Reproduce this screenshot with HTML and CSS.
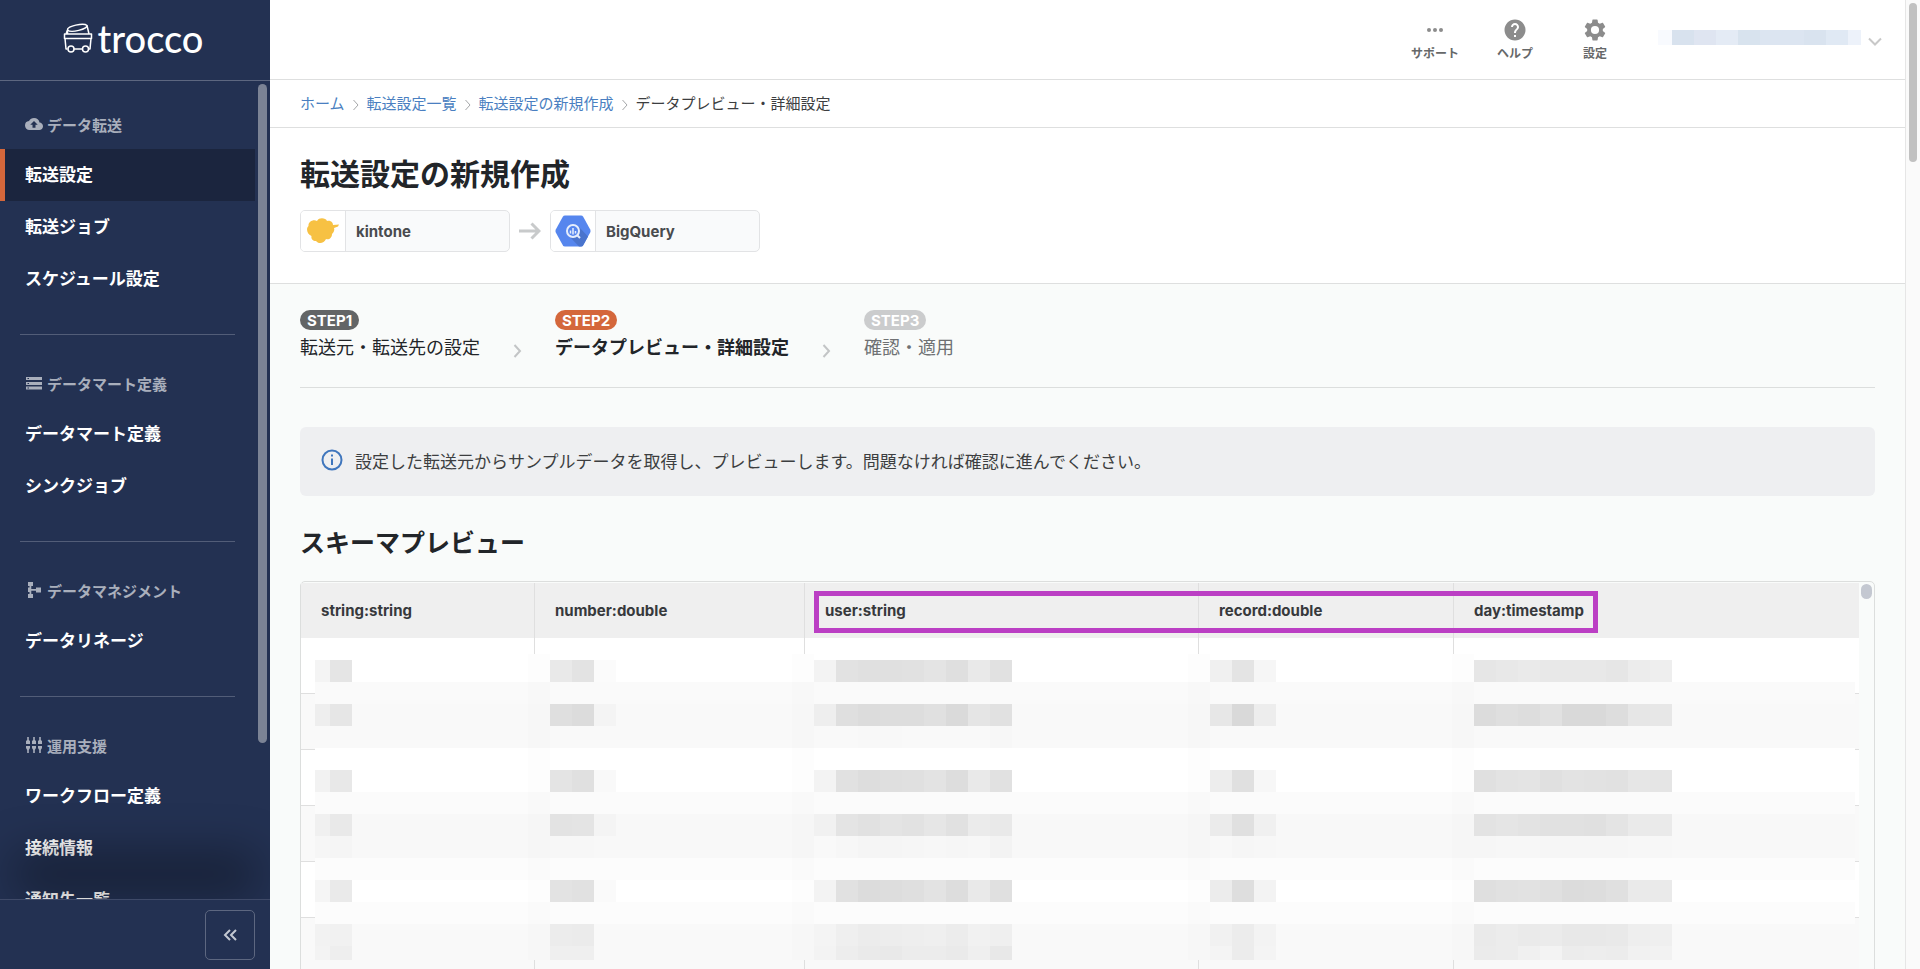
FILE: index.html
```html
<!DOCTYPE html>
<html lang="ja">
<head>
    <meta charset="UTF-8">
    <meta name="viewport" content="width=device-width, initial-scale=1.0">
    <title>転送設定の新規作成 | trocco</title>
    <link rel="stylesheet" href="styles.css">
</head>
<body>
<div class="app">
    <!-- サイドバー -->
    <aside class="sidebar">
        <a class="logo" href="#" aria-label="trocco">
            <svg width="30" height="32" viewBox="0 0 30 32" fill="none" stroke="#fff" stroke-width="1.5" stroke-linejoin="round">
                <path d="M4.500 12V8L3.500 10.500V12M24 3.500L26 12"/>
                <path d="M4.500 8C3.500 4 21 .5 24 3.500 24.500 7 8 11.500 4.500 8z"/>
                <path d="M1.500 12h27v4.500h-27zM2 16.500l1 10.500h1.500M28 16.500L27 27h-1.500M11 27h8"/>
                <circle cx="8" cy="27" r="3"/>
                <circle cx="22.500" cy="27" r="3"/>
            </svg>
            <span>trocco</span>
        </a>
        <nav class="menu">
            <section class="menu-group">
                <h2 class="menu-title">
                    <svg width="18" height="18" viewBox="0 0 24 24" fill="currentColor"><path d="M19.350 10.040A7.490 7.490 0 0 0 12 4C9.110 4 6.600 5.640 5.350 8.040A5.994 5.994 0 0 0 0 14c0 3.310 2.690 6 6 6h13c2.760 0 5-2.240 5-5 0-2.640-2.050-4.780-4.650-4.960zM14 13v4h-4v-4H7l5-5 5 5h-3z"/></svg>
                    データ転送
                </h2>
                <a class="menu-item active" href="#">転送設定</a>
                <a class="menu-item" href="#">転送ジョブ</a>
                <a class="menu-item" href="#">スケジュール設定</a>
            </section>
            <section class="menu-group">
                <h2 class="menu-title">
                    <svg width="18" height="18" viewBox="0 0 18 18" fill="currentColor"><path fill-rule="evenodd" d="M1 3h16v3H1zM2.500 4v1H4V4zM1 8h16v3H1zM2.500 9v1H4V9zM1 12.500h16v3H1zM2.500 13.500v1H4v-1z"/></svg>
                    データマート定義
                </h2>
                <a class="menu-item" href="#">データマート定義</a>
                <a class="menu-item" href="#">シンクジョブ</a>
            </section>
            <section class="menu-group">
                <h2 class="menu-title">
                    <svg width="18" height="18" viewBox="0 0 18 18" fill="currentColor"><path d="M3 1h5v4H6.300v3H11V6.500h5v5h-5V9.700H6.300V13H8v4H3v-4h1.500v-2H3V6.500h1.500V5H3z"/></svg>
                    データマネジメント
                </h2>
                <a class="menu-item" href="#">データリネージ</a>
            </section>
            <section class="menu-group">
                <h2 class="menu-title">
                    <svg width="18" height="18" viewBox="0 0 18 18" fill="currentColor"><path d="M2.200 1h1.600v3L5 5v3H1V5l1.200-1zM8.200 1h1.600v3L11 5v3H7V5l1.200-1zM14.200 1h1.600v3L17 5v3h-4V5l1.200-1zM1 10h4v2l-1.200 2v3H2.200v-3L1 12zM7 10h4v2l-1.200 2v3H8.200v-3L7 12zM13 10h4v2l-1.200 2v3h-1.600v-3L13 12z"/></svg>
                    運用支援
                </h2>
                <a class="menu-item" href="#">ワークフロー定義</a>
                <a class="menu-item" href="#">接続情報</a>
                <a class="menu-item" href="#">通知先一覧</a>
            </section>
        </nav>
        <span class="menu-scroll"></span>
        <div class="sidebar-footer">
            <button class="collapse" type="button" aria-label="メニューを閉じる">
                <svg width="16" height="14" viewBox="0 0 16 14" fill="none" stroke="currentColor" stroke-width="2"><path d="M8 2L3 7l5 5M14 2L9 7l5 5"/></svg>
            </button>
        </div>
    </aside>

    <main class="main">
        <header class="topbar">
            <button class="top-btn" type="button">
                <svg width="22" height="22" viewBox="0 0 22 22" fill="currentColor"><circle cx="5" cy="11" r="2"/><circle cx="11" cy="11" r="2"/><circle cx="17" cy="11" r="2"/></svg>
                サポート
            </button>
            <button class="top-btn" type="button">
                <svg width="22" height="22" viewBox="1 1 22 22" fill="currentColor"><path d="M12 1.500C6.200 1.500 1.500 6.200 1.500 12S6.200 22.500 12 22.500 22.500 17.800 22.500 12 17.800 1.500 12 1.500zM13 19h-2v-2h2v2zm2.070-7.750l-.9.920C13.450 12.900 13 13.500 13 15h-2v-.5c0-1.100.450-2.100 1.170-2.830l1.240-1.260c.370-.360.590-.860.590-1.410 0-1.100-.9-2-2-2s-2 .9-2 2H8c0-2.210 1.790-4 4-4s4 1.790 4 4c0 .880-.360 1.680-.930 2.250z"/></svg>
                ヘルプ
            </button>
            <button class="top-btn" type="button">
                <svg width="22" height="22" viewBox="1.500 1.500 21 21" fill="currentColor"><path d="M19.430 12.980c.040-.320.070-.640.070-.980s-.030-.660-.070-.980l2.110-1.650c.190-.150.240-.420.120-.640l-2-3.460c-.120-.220-.390-.300-.610-.220l-2.490 1c-.520-.400-1.080-.730-1.690-.980l-.380-2.650A.488.488 0 0 0 14 2h-4c-.250 0-.460.180-.490.420l-.380 2.650c-.610.250-1.170.590-1.690.980l-2.490-1c-.230-.090-.490 0-.610.220l-2 3.460c-.130.220-.070.490.120.640l2.110 1.650c-.040.320-.070.650-.070.980s.030.660.070.980l-2.110 1.650c-.190.150-.240.420-.120.640l2 3.460c.120.220.390.300.610.220l2.490-1c.520.400 1.080.730 1.690.980l.380 2.650c.030.240.240.420.490.420h4c.250 0 .460-.180.490-.420l.380-2.650c.610-.250 1.170-.590 1.690-.980l2.490 1c.230.090.490 0 .610-.220l2-3.460c.120-.220.070-.490-.120-.640l-2.110-1.650zM12 15.900a3.900 3.900 0 1 1 0-7.800 3.900 3.900 0 0 1 0 7.800z"/></svg>
                設定
            </button>
            <button class="account" type="button" aria-label="アカウント">
                <svg width="203" height="15" viewBox="0 0 203 15" shape-rendering="crispEdges">
                    <path fill="#f8fafe" d="M0 0h14v15H0z"/>
                    <path fill="#d8e2ee" d="M14 0h22v15H14z"/>
                    <path fill="#dfe5f1" d="M36 0h22v15H36z"/>
                    <path fill="#e4ebf5" d="M58 0h22v15H58z"/>
                    <path fill="#d8e3ee" d="M80 0h22v15H80z"/>
                    <path fill="#dce5f1" d="M102 0h44v15h-44z"/>
                    <path fill="#d9e3ef" d="M146 0h22v15h-22z"/>
                    <path fill="#e0e9f4" d="M168 0h22v15h-22z"/>
                    <path fill="#edf2fa" d="M190 0h13v15h-13z"/>
                </svg>
                <svg class="account-arrow" width="14" height="10" viewBox="0 0 14 10" fill="none" stroke="#c8c8c8" stroke-width="2"><path d="M1 1.500l6 6 6-6"/></svg>
            </button>
        </header>

        <nav class="breadcrumb">
            <a href="#">ホーム</a>
            <svg class="crumb-arrow" width="8" height="12" viewBox="0 0 8 12"><path d="M1.500 1L6 6l-4.500 5"/></svg>
            <a href="#">転送設定一覧</a>
            <svg class="crumb-arrow" width="8" height="12" viewBox="0 0 8 12"><path d="M1.500 1L6 6l-4.500 5"/></svg>
            <a href="#">転送設定の新規作成</a>
            <svg class="crumb-arrow" width="8" height="12" viewBox="0 0 8 12"><path d="M1.500 1L6 6l-4.500 5"/></svg>
            <span>データプレビュー・詳細設定</span>
        </nav>

        <div class="page-head">
            <h1>転送設定の新規作成</h1>
            <div class="route">
                <div class="connector">
                    <span class="connector-icon">
                        <svg width="32" height="26" viewBox="0 0 32 26"><path fill="#f7c143" d="M10 3c2-4 9-3 10 0 4-1 6 2 6 4l6-.5-1 2-4 1.500c1 3-1 5-2 6 0 4-3 6-6 5-2 5-8 5-10 2-4 0-5-3-4.500-5C-.5 16-1 10 1.500 8 1 4 6 1 10 3z"/></svg>
                    </span>
                    <span class="connector-name">kintone</span>
                </div>
                <svg class="route-arrow" width="22" height="18" viewBox="0 0 22 18" fill="none" stroke="#c8cacb" stroke-width="3"><path d="M0 9h19M12.500 1.500L20 9l-7.500 7.500"/></svg>
                <div class="connector">
                    <span class="connector-icon">
                        <svg width="36" height="32" viewBox="0 0 36 32">
                            <path fill="#5686ee" d="M10 .5h16q1.500 0 2.200 1.200l7 12.800q.8 1.500 0 3l-7 12.800q-.7 1.200-2.200 1.200H10q-1.500 0-2.200-1.200l-7-12.800q-.8-1.500 0-3l7-12.800Q8.500.5 10 .5z"/>
                            <path fill="#4a74cd" d="M14 21l10-9 9 9.500-4.800 8.800q-.7 1.200-2.200 1.200h-2z"/>
                            <circle cx="18" cy="16" r="6" fill="#5686ee" stroke="#e6eefc" stroke-width="2"/>
                            <path stroke="#e6eefc" stroke-width="2" d="M22.500 20.500l2.500 2.500"/>
                            <path stroke="#e6eefc" stroke-width="1.500" d="M15.500 15.500v3M18 13v6.500M20.500 16v2.500"/>
                        </svg>
                    </span>
                    <span class="connector-name">BigQuery</span>
                </div>
            </div>
        </div>

        <div class="content">
            <ol class="steps">
                <li class="step done"><span class="badge">STEP1</span>転送元・転送先の設定</li>
                <li class="step-arrow"><svg width="9" height="14" viewBox="0 0 9 14"><path d="M1.500 1L7 7l-5.500 6"/></svg></li>
                <li class="step current"><span class="badge">STEP2</span>データプレビュー・詳細設定</li>
                <li class="step-arrow"><svg width="9" height="14" viewBox="0 0 9 14"><path d="M1.500 1L7 7l-5.500 6"/></svg></li>
                <li class="step todo"><span class="badge">STEP3</span>確認・適用</li>
            </ol>

            <div class="notice">
                <svg width="22" height="22" viewBox="0 0 22 22" fill="none" stroke="#3f76bd" stroke-width="2"><circle cx="11" cy="11" r="9.500"/><path d="M11 9.500V16M11 5.500v2"/></svg>
                <p>設定した転送元からサンプルデータを取得し、プレビューします。問題なければ確認に進んでください。</p>
            </div>

            <h2 class="section-title">スキーマプレビュー</h2>
            <div class="preview">
                <table>
                    <colgroup>
                        <col class="col-string"><col class="col-number"><col class="col-user"><col class="col-record"><col>
                    </colgroup>
                    <thead>
                        <tr><th>string:string</th><th>number:double</th><th>user:string</th><th>record:double</th><th>day:timestamp</th></tr>
                    </thead>
                    <tbody>
                        <tr><td></td><td></td><td></td><td></td><td></td></tr>
                        <tr><td></td><td></td><td></td><td></td><td></td></tr>
                        <tr><td></td><td></td><td></td><td></td><td></td></tr>
                        <tr><td></td><td></td><td></td><td></td><td></td></tr>
                        <tr><td></td><td></td><td></td><td></td><td></td></tr>
                        <tr><td></td><td></td><td></td><td></td><td></td></tr>
                    </tbody>
                </table>
                <svg class="mosaic" id="mosaic" shape-rendering="crispEdges" aria-hidden="true"></svg>
                <span class="highlight"></span>
                <span class="preview-scroll"></span>
            </div>
        </div>
    </main>
    <div class="page-scroll"><span></span></div>
</div>
<script src="script.js"></script>
</body>
</html>
```
FILE: styles.css
```css
* {
    box-sizing: border-box;
}

body {
    margin: 0;
    font-family: Inter, "Noto Sans CJK JP", sans-serif;
    color: #222529;
    background: #f9fbfa;
    overflow: hidden;
}

h1, h2, p, ol {
    margin: 0;
    padding: 0;
}

a {
    text-decoration: none;
}

button {
    font-family: inherit;
    background: none;
    border: none;
    padding: 0;
    cursor: pointer;
}

svg {
    flex-shrink: 0;
}

.app {
    display: flex;
    height: 100vh;
}

/* サイドバー */
.sidebar {
    position: relative;
    display: flex;
    flex-direction: column;
    flex: 0 0 270px;
    background: #233152;
    overflow: hidden;
}

.logo {
    display: flex;
    align-items: center;
    justify-content: center;
    gap: 5px;
    flex: 0 0 81px;
    padding-right: 4px;
    padding-bottom: 5px;
    border-bottom: 1px solid #5d6780;
    color: #fff;
    font-family: Lato, sans-serif;
    font-size: 38px;
    font-weight: 500;
    line-height: 40px;
}

.menu {
    flex: 1;
    min-height: 0;
    overflow: hidden;
    padding-right: 15px;
}

.menu-group {
    padding: 31px 0 29px;
}

.menu-group + .menu-group::before {
    content: "";
    display: block;
    height: 1px;
    margin: 0 20px 36px;
    background: #525d78;
}

.menu-group + .menu-group {
    padding-top: 0;
}

.menu-title {
    display: flex;
    align-items: center;
    gap: 4px;
    height: 24px;
    margin-bottom: 13px;
    padding-left: 25px;
    color: #a9afbc;
    font-size: 15px;
    font-weight: 700;
}

.menu-item {
    display: block;
    height: 52px;
    padding-left: 25px;
    color: #fff;
    font-size: 17px;
    font-weight: 700;
    line-height: 52px;
}

.menu-item.active {
    background: #1b253e;
    box-shadow: inset 5px 0 #d4673b;
}

.menu-scroll {
    position: absolute;
    top: 84px;
    right: 3px;
    width: 9px;
    height: 68%;
    border-radius: 5px;
    background: #7b8395;
}

.sidebar-footer {
    position: relative;
    display: flex;
    align-items: center;
    justify-content: flex-end;
    flex: 0 0 70px;
    padding-right: 15px;
    border-top: 1px solid #3f4a68;
    background: #233152;
    box-shadow: 0 -60px 45px -14px rgba(0, 0, 0, 0.35);
}

.collapse {
    display: flex;
    align-items: center;
    justify-content: center;
    width: 50px;
    height: 50px;
    border: 1px solid #5d6780;
    border-radius: 5px;
    color: #c3c8d2;
}

/* メイン */
.main {
    flex: 1;
    min-width: 0;
    overflow: hidden;
}

.topbar {
    display: flex;
    justify-content: flex-end;
    height: 80px;
    padding-right: 23px;
    border-bottom: 1px solid #dedfdf;
    background: #fff;
}

.top-btn {
    display: flex;
    flex-direction: column;
    align-items: center;
    gap: 4px;
    width: 80px;
    padding-top: 19px;
    color: #666869;
    font-size: 12px;
    font-weight: 700;
    line-height: 18px;
}

.top-btn svg {
    color: #8c8c8c;
}

.account {
    display: flex;
    align-items: center;
    gap: 7px;
    height: 75px;
    margin-left: 23px;
}

.account-arrow {
    margin-top: 9px;
}

.breadcrumb {
    display: flex;
    align-items: center;
    gap: 7px;
    height: 48px;
    padding: 0 30px 2px;
    border-bottom: 1px solid #dedfdf;
    background: #fff;
    color: #3c3e40;
    font-size: 15px;
}

.breadcrumb a {
    color: #4a7fc1;
}

.crumb-arrow {
    margin-top: 5px;
    fill: none;
    stroke: #a5a7a9;
}

.page-head {
    height: 156px;
    padding: 24px 30px 0;
    border-bottom: 1px solid #dedfdf;
    background: #fff;
}

h1 {
    margin-bottom: 14px;
    font-size: 30px;
    line-height: 44px;
}

.route {
    display: flex;
    align-items: center;
    gap: 9px;
}

.connector {
    display: flex;
    width: 210px;
    height: 42px;
    border: 1px solid #e2e3e5;
    border-radius: 5px;
    background: #f9fafb;
    overflow: hidden;
}

.connector-icon {
    display: flex;
    align-items: center;
    justify-content: center;
    width: 45px;
    border-right: 1px solid #e2e3e5;
    background: #fff;
}

.connector-name {
    padding-left: 10px;
    color: #494b4e;
    font-size: 15px;
    font-weight: 700;
    line-height: 42px;
}

.content {
    padding: 0 30px;
}

.steps {
    display: flex;
    gap: 33px;
    height: 104px;
    padding-top: 26px;
    border-bottom: 1px solid #dcdedd;
    list-style: none;
}

.step {
    display: flex;
    flex-direction: column;
    align-items: flex-start;
    gap: 4px;
    font-size: 18px;
    line-height: 27px;
}

.badge {
    height: 20px;
    padding: 0 7px;
    border-radius: 10px;
    background: #636566;
    color: #fff;
    font-size: 15px;
    font-weight: 700;
    line-height: 21px;
}

.step.current {
    font-weight: 700;
}

.step.current .badge {
    background: #d4673b;
}

.step.todo {
    color: #6f7173;
}

.step.todo .badge {
    background: #cbcccd;
}

.step-arrow {
    padding-top: 32px;
}

.step-arrow path {
    fill: none;
    stroke: #c3c5c6;
    stroke-width: 2;
}

.notice {
    display: flex;
    align-items: center;
    gap: 12px;
    min-height: 69px;
    margin-top: 39px;
    padding: 0 21px;
    border-radius: 6px;
    background: #eeeff1;
    color: #3c3e40;
    font-size: 17px;
    line-height: 24px;
}

.notice svg {
    margin-bottom: 4px;
}

.section-title {
    margin: 29px 0 19px;
    font-size: 25px;
    line-height: 37px;
}

/* プレビュー */
.preview {
    position: relative;
    padding: 1px 15px 0 0;
    border: 1px solid #dcdedd;
    border-radius: 5px 5px 0 0;
}

table {
    width: 100%;
    table-layout: fixed;
    border-collapse: separate;
    border-spacing: 0;
    background: #fff;
}

.col-string {
    width: 233px;
}

.col-number {
    width: 270px;
}

.col-user {
    width: 394px;
}

.col-record {
    width: 255px;
}

th {
    height: 55px;
    padding: 0 20px;
    background: #efefef;
    color: #37393c;
    font-size: 15px;
    font-weight: 700;
    text-align: left;
}

td {
    height: 56px;
    border-bottom: 1px solid #dfdfdf;
}

th + th, td + td {
    border-left: 1px solid #dfdfdf;
}

tbody tr:nth-child(even) {
    background: #f9f9f9;
}

.mosaic {
    position: absolute;
    top: 72px;
    left: 14px;
    width: calc(100% - 33px);
    height: 306px;
}

.highlight {
    position: absolute;
    top: 9px;
    left: 513px;
    width: 784px;
    height: 42px;
    border: 5px solid #bb3fc4;
}

.preview-scroll {
    position: absolute;
    top: 2px;
    right: 2px;
    width: 11px;
    height: 15px;
    border-radius: 6px;
    background: #c4c8d1;
}

.page-scroll {
    flex: 0 0 15px;
    padding: 3px 3px 0;
    border-left: 1px solid #e6e6e6;
    background: #fafafa;
}

.page-scroll span {
    display: block;
    width: 8px;
    height: 159px;
    border-radius: 4px;
    background: #c1c1c1;
}
```
FILE: script.js
```javascript
// データ部分を隠すモザイク
const mosaic = document.getElementById("mosaic");

function block(x, y, width, height, fill) {
    const rect = document.createElementNS("http://www.w3.org/2000/svg", "rect");
    rect.setAttribute("x", x);
    rect.setAttribute("y", y);
    rect.setAttribute("width", width);
    rect.setAttribute("height", height);
    rect.setAttribute("fill", fill);
    mosaic.appendChild(rect);
}

// 背景の帯 [y, 高さ, 色]
const bands = [
    [0, 28, "#ffffff"], [28, 22, "#fafafa"], [50, 44, "#f9f9f9"], [94, 44, "#ffffff"],
    [138, 22, "#fbfbfb"], [160, 44, "#f8f8f8"], [204, 22, "#fcfcfc"], [226, 22, "#ffffff"],
    [248, 22, "#fcfcfc"], [270, 36, "#f9f9f9"]
];
bands.forEach(([y, height, fill]) => block(0, y, "100%", height, fill));

// 列の境目
[213, 477, 873, 1137].forEach(x => block(x, 0, 22, 306, "rgba(0,0,0,0.006)"));

// 行ごとのブロック: 列の順に明るさを並べる
const columns = [15, 235, 499, 895, 1159];
const rows = [
    [6, 22, ["f4 e5", "e9 e3 fb", "f3 e2 e0 e0 e1 e4 df e9 e1", "f0 e4 f6", "e6 e8 ea e8 e8 e8 e6 ec ee"]],
    [50, 22, ["ee e6", "df dc f4", "ee df dc dd dd e0 da e5 e1", "e7 d9 ed", "dc df dd e1 d9 d9 dd e6 e7"]],
    [72, 22, ["f9 f9", "f9 f9 f9", "f9 f9 f8 f8 f9 f9 f9 f9 f7", "f9 f9 f9", "f9 f9 f9 f9 f9 f9 f9 f9 f9"]],
    [116, 22, ["f2 e8", "e4 e0 f9", "f3 e1 dd df e0 e3 dd e9 e1", "ed e0 f7", "e0 e3 e4 e0 e3 e2 e1 e6 e5"]],
    [160, 22, ["f0 e9", "e3 e4 f4", "f1 e4 e1 e4 e2 e6 e1 eb e9", "eb e0 f0", "e3 e5 e3 e1 e1 e0 e4 ea ea"]],
    [182, 22, ["f6 f5", "f7 f7 f8", "f9 f7 f5 f5 f6 f7 f6 f7 f3", "f8 f6 f7", "f6 f7 f7 f6 f6 f6 f6 f7 f7"]],
    [226, 22, ["f5 ea", "e3 e1 fa", "f3 e1 dc dd df e3 dd e9 e0", "ec de f3", "df e1 e2 e0 dc dd e0 ea ea"]],
    [270, 22, ["f2 f1", "ec eb f9", "f4 ef ec ed ee ef ec f1 ef", "f1 ec f3", "ea ec ea eb e8 e8 e9 ee ef"]],
    [292, 14, ["f3 ee", "ef ef f9", "f3 ed ea e9 ec ec ea ef e8", "f4 ec f4", "eb ec f0 f3 ec ed ec f1 f2"]]
];
rows.forEach(([y, height, cells]) => {
    cells.forEach((cell, c) => {
        cell.split(" ").forEach((v, i) => {
            // 先頭列だけ左端のブロックが狭い
            const first = c === 0 && i === 0;
            const x = first ? 0 : columns[c] + (c === 0 ? i - 1 : i) * 22;
            block(x, y, first ? 15 : 22, height, "#" + v + v + v);
        });
    });
});
```
